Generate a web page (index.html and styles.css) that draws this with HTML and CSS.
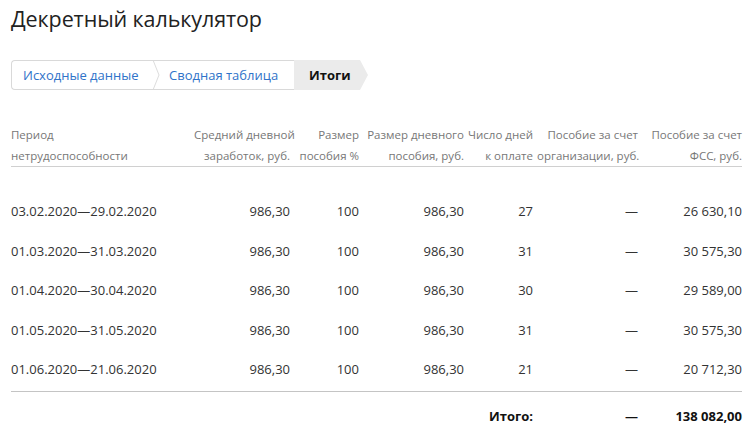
FILE: index.html
```html
<!DOCTYPE html>
<html lang="ru">
<head>
<meta charset="utf-8">
<link rel="stylesheet" href="styles.css">
</head>
<body>
<div class="page">
  <h1 class="title">Декретный калькулятор</h1>
  <nav class="crumbs">
    <a class="crumb crumb-first">Исходные данные</a>
    <svg class="sep" width="14" height="30" viewBox="0 0 14 30"><path d="M1 0 L7 15 L1 30" fill="none" stroke="#d9d9d9" stroke-width="1"/></svg>
    <a class="crumb">Сводная таблица</a>
    <span class="crumb crumb-active">Итоги</span>
  </nav>
  <table class="calc">
    <colgroup>
      <col class="c1"><col class="c2"><col class="c3"><col class="c4"><col class="c5"><col class="c6"><col class="c7">
    </colgroup>
    <thead>
      <tr>
        <th class="left">Период<br>нетрудоспособности</th>
        <th>Средний дневной<br>заработок, руб.</th>
        <th>Размер<br>пособия %</th>
        <th>Размер дневного<br>пособия, руб.</th>
        <th>Число дней<br>к оплате</th>
        <th>Пособие за счет<br>организации, руб.</th>
        <th>Пособие за счет<br>ФСС, руб.</th>
      </tr>
    </thead>
    <tbody>
      <tr class="first"><td class="left">03.02.2020—29.02.2020</td><td>986,30</td><td>100</td><td>986,30</td><td>27</td><td>—</td><td>26 630,10</td></tr>
      <tr><td class="left">01.03.2020—31.03.2020</td><td>986,30</td><td>100</td><td>986,30</td><td>31</td><td>—</td><td>30 575,30</td></tr>
      <tr><td class="left">01.04.2020—30.04.2020</td><td>986,30</td><td>100</td><td>986,30</td><td>30</td><td>—</td><td>29 589,00</td></tr>
      <tr><td class="left">01.05.2020—31.05.2020</td><td>986,30</td><td>100</td><td>986,30</td><td>31</td><td>—</td><td>30 575,30</td></tr>
      <tr class="last"><td class="left">01.06.2020—21.06.2020</td><td>986,30</td><td>100</td><td>986,30</td><td>21</td><td>—</td><td>20 712,30</td></tr>
    </tbody>
    <tfoot>
      <tr><td colspan="4"></td><td class="total-label">Итого:</td><td class="total">—</td><td class="total">138 082,00</td></tr>
    </tfoot>
  </table>
</div>
</body>
</html>
```
FILE: styles.css
```css
html, body {
  margin: 0;
  padding: 0;
  background: #fff;
}
body {
  font-family: "Open Sans", "Noto Sans", sans-serif;
  color: #333;
}
.page {
  padding: 4px 14px 0 11px;
}
.title {
  margin: 0;
  font-size: 21.5px;
  font-weight: 400;
  line-height: 30px;
  color: #222;
  letter-spacing: -0.1px;
}
.crumbs {
  display: flex;
  margin-top: 26px;
  height: 30px;
  width: 357px;
}
.crumb {
  display: flex;
  align-items: center;
  height: 28px;
  border-top: 1px solid #d9d9d9;
  border-bottom: 1px solid #d9d9d9;
  font-size: 13px;
  color: #2f73c9;
  text-decoration: none;
  white-space: nowrap;
}
.crumb-first {
  padding-left: 11px;
  width: 129px;
  border-left: 1px solid #d9d9d9;
  border-radius: 4px 0 0 4px;
}
.sep {
  flex: none;
  border-top: 1px solid #d9d9d9;
  border-bottom: 1px solid #d9d9d9;
  height: 28px;
  box-sizing: content-box;
  display: block;
}
.crumb:nth-of-type(2) {
  padding-left: 3px;
  width: 125px;
}
.crumb-active {
  flex: 1;
  height: 30px;
  border: none;
  background: #ebebeb;
  color: #111;
  font-weight: 700;
  padding-left: 15px;
  clip-path: polygon(0 0, calc(100% - 8px) 0, 100% 50%, calc(100% - 8px) 100%, 0 100%);
}
.calc {
  margin-top: 34px;
  width: 731px;
  table-layout: fixed;
  border-collapse: collapse;
}
.c1 { width: 179px; }
.c2 { width: 100px; }
.c3 { width: 69px; }
.c4 { width: 105px; }
.c5 { width: 69px; }
.c6 { width: 105px; }
.c7 { width: 104px; }
th {
  font-size: 11.5px;
  font-weight: 400;
  color: #777;
  line-height: 21px;
  text-align: right;
  padding: 0 0 0 4px;
  border-bottom: 1px solid #d0d0d0;
  white-space: nowrap;
  vertical-align: top;
}
td {
  font-size: 13px;
  line-height: 19.5px;
  padding: 10px 0 10px 4px;
  text-align: right;
  white-space: nowrap;
  color: #333;
}
.left {
  text-align: left;
  padding-left: 0;
}
tr.first td {
  padding-top: 35px;
}
tr.last td {
  border-bottom: 1px solid #c4c4c4;
  padding-bottom: 11px;
}
tfoot td {
  padding-top: 15px;
  font-weight: 700;
  color: #111;
}
.total-label {
  text-align: right;
}
```
